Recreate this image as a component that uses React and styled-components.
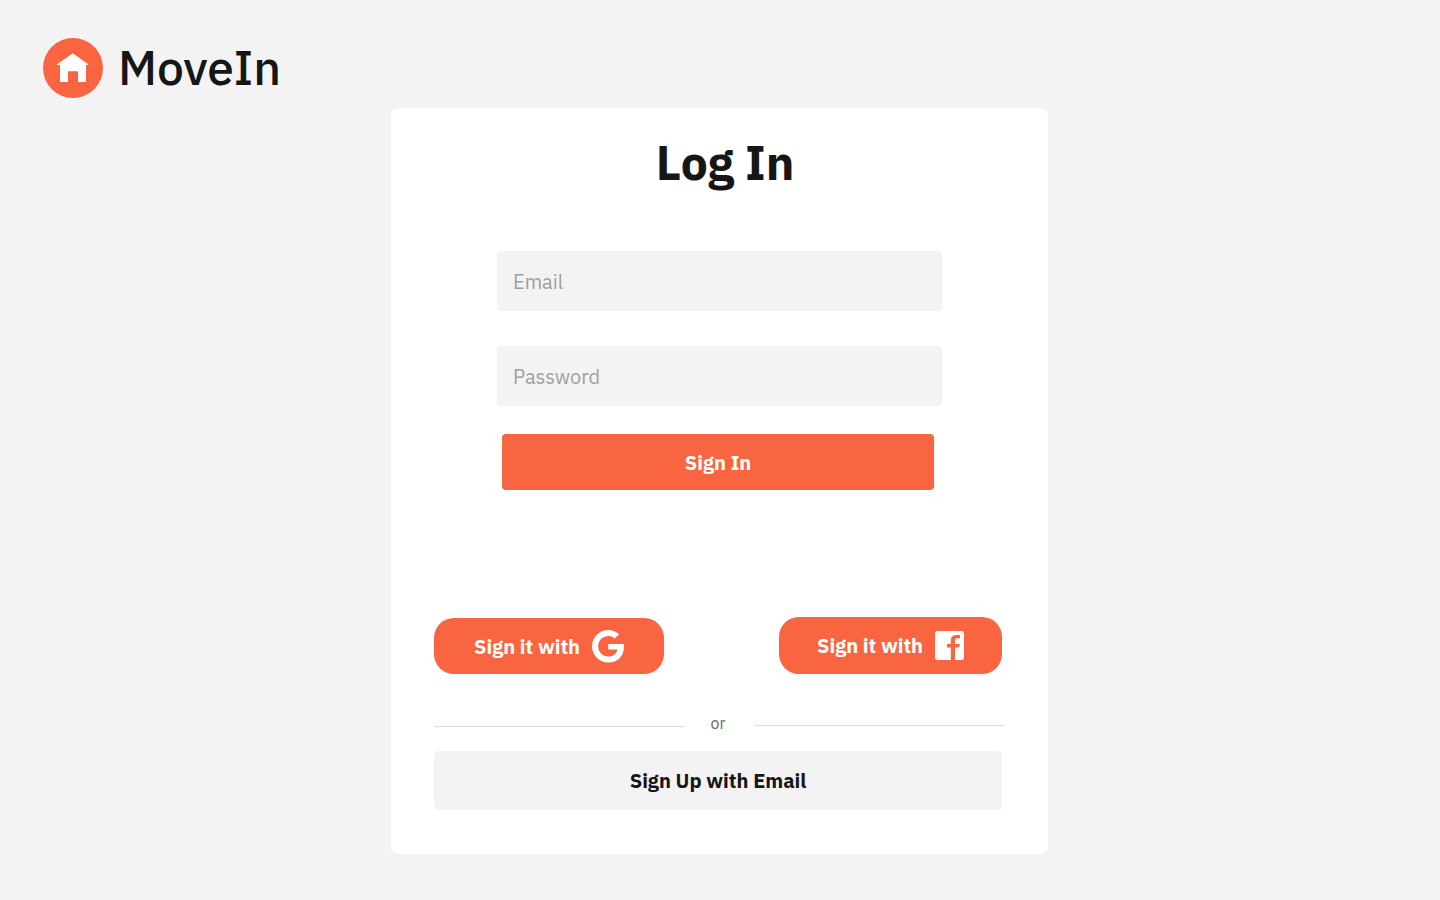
import React from "react";
import styled, { createGlobalStyle } from "styled-components";

const GlobalStyle = createGlobalStyle`
  *, *::before, *::after { box-sizing: border-box; }
  body {
    margin: 0;
    background: #f3f3f3;
    color: #161616;
    font-family: "IBM Plex Sans", "Noto Sans", sans-serif;
  }
  button, input { font: inherit; border: 0; margin: 0; }
`;

const Page = styled.div`
  height: 900px;
  display: flex;
  flex-direction: column;
  overflow: hidden;
`;

const Header = styled.header`
  height: 108px;
  padding: 38px 43px 0;
  display: flex;
  align-items: flex-start;
  gap: 15px;
`;

const Badge = styled.span`
  width: 60px;
  height: 60px;
  border-radius: 50%;
  background: #f86540;
  flex: none;
`;

const Brand = styled.span`
  font-size: 48px;
  font-weight: 500;
  line-height: 58px;
  letter-spacing: -0.2px;
  white-space: nowrap;
`;

const Card = styled.main`
  width: 657px;
  height: 746px;
  margin-left: 391px;
  padding: 0 43px;
  border-radius: 8px;
  background: #fff;
  display: flex;
  flex-direction: column;
`;

const Title = styled.h1`
  margin: 24px 0 0 11px;
  height: 119px;
  font-size: 48px;
  line-height: 60px;
  font-weight: 700;
  letter-spacing: -0.15px;
  text-align: center;
`;

const Form = styled.form`
  width: 445px;
  margin-left: 63px;
  display: flex;
  flex-direction: column;
  gap: 35px;
`;

const Field = styled.input`
  width: 100%;
  height: 60px;
  padding: 0 16px;
  border-radius: 4px;
  background: #f3f3f3;
  font-size: 20px;
  outline: none;
  &::placeholder { color: #a0a0a0; opacity: 1; }
`;

const Button = styled.button`
  display: flex;
  align-items: center;
  justify-content: center;
  padding: 0;
  height: ${(p) => p.$height || 56}px;
  width: ${(p) => p.$width}px;
  border-radius: ${(p) => (p.$pill ? 20 : 4)}px;
  background: ${(p) => (p.$muted ? "#f3f3f3" : "#f86540")};
  color: ${(p) => (p.$muted ? "#161616" : "#fff")};
  font-size: 20px;
  font-weight: 700;
  line-height: 28px;
  white-space: nowrap;
`;

const Submit = styled(Button)`
  margin: -7px 0 0 5px;
  padding-top: 2px;
`;

const Social = styled.div`
  margin-top: 127px;
  width: 568px;
  display: flex;
  justify-content: space-between;
  align-items: flex-end;
`;

const SocialButton = styled(Button)`
  gap: 12px;
`;

const SocialLabel = styled.span`
  padding-top: ${(p) => p.$drop || 0}px;
`;

const Divider = styled.div`
  margin-top: 40px;
  height: 37px;
  width: 571px;
  display: flex;
  align-items: flex-start;
`;

const Rule = styled.span`
  width: 251px;
  height: 1px;
  margin-top: ${(p) => p.$top}px;
  background: #dcdcdc;
`;

const Or = styled.span`
  width: 69px;
  padding-right: 3px;
  text-align: center;
  font-size: 16px;
  line-height: 18px;
  color: #6a6a6a;
`;

function HouseBadge() {
  return (
    <Badge>
      <svg width="60" height="60" viewBox="0 0 60 60" fill="#fff">
        <path d="M29.7 15.3L45.3 26.2V27H43V44H35V33.2H25V44H17V27H14.2V26.2Z" />
      </svg>
    </Badge>
  );
}

function GoogleIcon() {
  return (
    <svg width="32" height="33" viewBox="0 8 488 503" preserveAspectRatio="none" fill="#fff">
      <path d="M488 261.8C488 403.3 391.1 504 248 504 110.8 504 0 393.2 0 256S110.8 8 248 8c66.8 0 123 24.5 166.3 64.9l-67.5 64.9C258.5 52.6 94.3 116.6 94.3 256c0 86.5 69.1 156.6 153.7 156.6 98.2 0 135-70.4 140.8-106.9H248v-85.3h236.1c2.3 12.7 3.9 24.9 3.9 41.4z" />
    </svg>
  );
}

function FacebookIcon() {
  return (
    <svg width="29" height="29" viewBox="0 0 29 29" fill="#fff">
      <path d="M2.5 0H26.5A2.5 2.5 0 0 1 29 2.5V26.5A2.5 2.5 0 0 1 26.5 29H20V16.5H24.3L24.8 13H20V10.2C20 8.4 20.6 7.3 22.6 7.3H25V4.1H21.6C17.7 4.1 15.8 6.2 15.8 9.7V13H12V16.5H15.8V29H2.5A2.5 2.5 0 0 1 0 26.5V2.5A2.5 2.5 0 0 1 2.5 0Z" />
    </svg>
  );
}

export default function App() {
  return (
    <Page>
      <GlobalStyle />
      <Header>
        <HouseBadge />
        <Brand>MoveIn</Brand>
      </Header>
      <Card>
        <Title>Log In</Title>
        <Form onSubmit={(e) => e.preventDefault()}>
          <Field type="email" placeholder="Email" />
          <Field type="password" placeholder="Password" />
          <Submit $width={432}>Sign In</Submit>
        </Form>
        <Social>
          <SocialButton $pill $width={230}>
            <SocialLabel $drop={2}>Sign it with</SocialLabel>
            <GoogleIcon />
          </SocialButton>
          <SocialButton $pill $width={223} $height={57}>
            <SocialLabel>Sign it with</SocialLabel>
            <FacebookIcon />
          </SocialButton>
        </Social>
        <Divider>
          <Rule $top={12} />
          <Or>or</Or>
          <Rule $top={11} />
        </Divider>
        <Button $muted $width={568} $height={59}>Sign Up with Email</Button>
      </Card>
    </Page>
  );
}
